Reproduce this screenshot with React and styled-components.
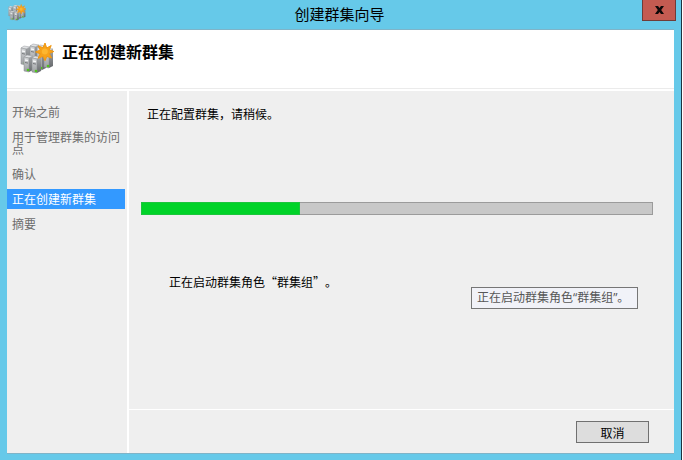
import React from 'react';
import styled, { createGlobalStyle } from 'styled-components';

const GlobalStyle = createGlobalStyle`
    * {
        box-sizing: border-box;
    }

    body {
        margin: 0;
        background: #fff;
        color: #000;
        font-family: 'Noto Sans CJK SC', sans-serif;
        font-size: 12px;
        line-height: 20px;
    }
`;

const Window = styled.div`
    min-height: 100vh;
    margin-right: 1px;
    padding: 0 7px 6px;
    display: flex;
    flex-direction: column;
    border-right: 1px solid #1d3440;
    background: #66c9e9;
`;

const TitleBar = styled.header`
    height: 29px;
    display: grid;
    grid-template-columns: 30px 1fr 34px;
    margin-right: -2px;
`;

const TitleIcon = styled.div`
    padding: 4px 1px;
`;

const Title = styled.h1`
    margin: 0;
    font-size: 15px;
    font-weight: 400;
    line-height: 28px;
    text-align: center;
`;

const CloseButton = styled.button`
    width: 34px;
    height: 21px;
    padding: 0;
    display: flex;
    align-items: center;
    justify-content: center;
    border: 1px solid #703c38;
    border-top: none;
    background: #c45b51;
`;

const Dialog = styled.div`
    flex: 1;
    display: flex;
    flex-direction: column;
    border-top: 1px solid #7fb4c8;
    border-bottom: 1px solid #7fb4c8;
    background: #fff;
`;

const Banner = styled.div`
    height: 59px;
    padding: 12px 13px;
    display: flex;
    gap: 8px;
    border-bottom: 1px solid #ebebeb;
`;

const Heading = styled.h2`
    margin: 0;
    font-size: 16px;
    font-weight: 700;
    line-height: 18px;
`;

const Body = styled.div`
    flex: 1;
    margin-top: 2px;
    display: grid;
    grid-template-columns: 120px 1fr;
    gap: 2px;
`;

const Steps = styled.ol`
    margin: 0;
    padding: 11px 2px 0 0;
    display: flex;
    flex-direction: column;
    gap: 5px;
    background: #efefef;
    list-style: none;
`;

const Step = styled.li`
    padding: 4px 4px 4px 5px;
    line-height: 12px;
    color: ${props => (props.$active ? '#fff' : '#6d6d6d')};
    background: ${props => (props.$active ? '#3399ff' : 'transparent')};
`;

const Main = styled.main`
    display: flex;
    flex-direction: column;
    background: #efefef;
`;

const Content = styled.section`
    position: relative;
    flex: 1;
    padding: 13px 21px 0 12px;
`;

const Message = styled.p`
    margin: 0 6px;
`;

const Status = styled.p`
    margin: 57px 28px 0;
    text-spacing-trim: space-all;
`;

const Progress = styled.progress`
    width: 100%;
    height: 13px;
    margin-top: 78px;
    display: block;
    appearance: none;
    border: none;

    &::-webkit-progress-bar {
        background: #c8c8c8;
        box-shadow: inset 0 0 0 1px #9b9b9b;
    }

    &::-webkit-progress-value {
        background: #00d328;
        box-shadow: inset 0 0 0 1px #1cc53c;
    }
`;

const Tooltip = styled.div`
    position: absolute;
    top: 196px;
    right: 36px;
    width: 167px;
    padding: 0 5px;
    border: 1px solid #767676;
    background: #f1f2f8;
    color: #575757;
    font-family: 'Open Sans', 'Noto Sans CJK SC', sans-serif;
    white-space: nowrap;
`;

const Footer = styled.footer`
    padding: 11px 25px 10px;
    display: flex;
    justify-content: flex-end;
    border-top: 1px solid #fff;
`;

const Button = styled.button`
    width: 73px;
    height: 22px;
    padding: 2px 0 0;
    border: 1px solid #707070;
    background: #dddddd;
    color: #000;
    font: inherit;
    line-height: 18px;
`;

const steps = [
    '开始之前',
    '用于管理群集的访问点',
    '确认',
    '正在创建新群集',
    '摘要'
];

const servers = [
    { x: 1, y: 5, h: 18 },
    { x: 10, y: 3, h: 18 },
    { x: 17, y: 4, h: 24 },
    { x: 24, y: 7, h: 19 },
    { x: 4, y: 14, h: 16 },
    { x: 12, y: 15, h: 16 }
];

const ClusterIcon = ({ size }) => (
    <svg width={size} height={size} viewBox="0 0 34 34" aria-hidden="true">
        <defs>
            <linearGradient id={`front${size}`} x1="0" y1="0" x2="0" y2="1">
                <stop offset="0" stopColor="#d3d5d7" />
                <stop offset="1" stopColor="#9a9da0" />
            </linearGradient>
            <linearGradient id={`side${size}`} x1="0" y1="0" x2="0" y2="1">
                <stop offset="0" stopColor="#a4a7aa" />
                <stop offset="1" stopColor="#66696c" />
            </linearGradient>
        </defs>
        {servers.map(({ x, y, h }) => (
            <g key={`${x}-${y}`}>
                <path
                    d={`M${x} ${y + 1}l3 -2 6 1 -4 2z`}
                    fill="#dfe1e3"
                    stroke="#9a9da0"
                    strokeWidth="0.5"
                />
                <path
                    d={`M${x + 5} ${y + 2}l4 -2v${h - 2}l-4 2z`}
                    fill={`url(#side${size})`}
                />
                <path
                    d={`M${x} ${y + 1}l5 1v${h - 2}l-5 -1z`}
                    fill={`url(#front${size})`}
                    stroke="#8b8e91"
                    strokeWidth="0.5"
                />
                <path
                    d={`M${x + 1} ${y + 4}l3 0.6`}
                    stroke="#f6f7f8"
                    strokeWidth="1.4"
                />
                <path
                    d={`M${x + 1} ${y + 6.5}l3 0.6`}
                    stroke="#6e7174"
                    strokeWidth="0.9"
                />
                <circle cx={x + 4} cy={y + h - 2} r="1.3" fill="#4fc41c" />
            </g>
        ))}
        <path
            d="M25 1l1.7 5 4.5-2.5-1.9 4.4 4.5 1.6-4.5 2.1 2.3 4.4-4.8-1.6-1.8 4.3-2-4.4-4.9 2 2.1-4.6-4.6-1.7 4.7-2-2.2-4.1 4.9 1.8z"
            fill="#f7a21a"
            stroke="#f09813"
            strokeWidth="1"
            strokeLinejoin="round"
        />
        <circle cx="24.8" cy="9.6" r="3" fill="#fdb62f" />
    </svg>
);

const App = () => {
    return (
        <>
            <GlobalStyle />
            <Window lang="zh-CN">
                <TitleBar>
                    <TitleIcon>
                        <ClusterIcon size={18} />
                    </TitleIcon>
                    <Title>创建群集向导</Title>
                    <CloseButton aria-label="关闭">
                        <svg width="9" height="8" viewBox="0 0 9 8">
                            <path
                                d="M0 0h3l1.5 2L6 0h3L6.2 4 9 8H6L4.5 6 3 8H0l2.8-4z"
                                fill="#0d0808"
                            />
                        </svg>
                    </CloseButton>
                </TitleBar>
                <Dialog>
                    <Banner>
                        <ClusterIcon size={34} />
                        <Heading>正在创建新群集</Heading>
                    </Banner>
                    <Body>
                        <Steps>
                            {steps.map((step, index) => (
                                <Step
                                    key={step}
                                    $active={index === 3}
                                    aria-current={
                                        index === 3 ? 'step' : undefined
                                    }
                                >
                                    {step}
                                </Step>
                            ))}
                        </Steps>
                        <Main>
                            <Content>
                                <Message>正在配置群集，请稍候。</Message>
                                <Progress
                                    value="31"
                                    max="100"
                                    aria-labelledby="status"
                                />
                                <Status id="status">
                                    正在启动群集角色“群集组”。
                                </Status>
                                <Tooltip role="tooltip">
                                    正在启动群集角色“群集组”。
                                </Tooltip>
                            </Content>
                            <Footer>
                                <Button>取消</Button>
                            </Footer>
                        </Main>
                    </Body>
                </Dialog>
            </Window>
        </>
    );
};

export default App;
